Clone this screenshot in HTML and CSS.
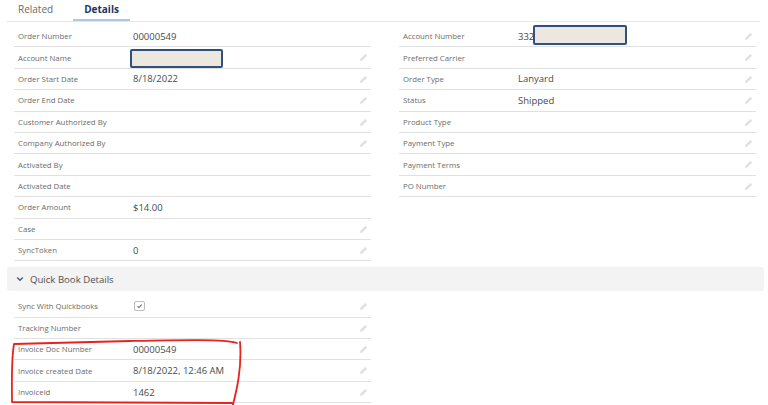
FILE: index.html
```html
<!DOCTYPE html>
<html lang="en">
<head>
    <meta charset="utf-8">
    <title>Order Details</title>
    <link rel="stylesheet" href="styles.css">
</head>
<body>
    <div class="page">
        <div class="tabs">
            <a class="tab">Related</a>
            <a class="tab active">Details</a>
        </div>

        <div class="fields">
            <div class="col">
                <div class="row"><span class="label">Order Number</span><span class="value">00000549</span></div>
                <div class="row"><span class="label">Account Name</span><span class="value"><span class="redact redact-name"></span></span><svg class="pencil" viewBox="0 0 10 10"><path d="M1 9l.6-2.6L7 1l2 2-5.4 5.4z"/></svg></div>
                <div class="row"><span class="label">Order Start Date</span><span class="value">8/18/2022</span><svg class="pencil" viewBox="0 0 10 10"><path d="M1 9l.6-2.6L7 1l2 2-5.4 5.4z"/></svg></div>
                <div class="row"><span class="label">Order End Date</span><span class="value"></span><svg class="pencil" viewBox="0 0 10 10"><path d="M1 9l.6-2.6L7 1l2 2-5.4 5.4z"/></svg></div>
                <div class="row"><span class="label">Customer Authorized By</span><span class="value"></span><svg class="pencil" viewBox="0 0 10 10"><path d="M1 9l.6-2.6L7 1l2 2-5.4 5.4z"/></svg></div>
                <div class="row"><span class="label">Company Authorized By</span><span class="value"></span><svg class="pencil" viewBox="0 0 10 10"><path d="M1 9l.6-2.6L7 1l2 2-5.4 5.4z"/></svg></div>
                <div class="row"><span class="label">Activated By</span><span class="value"></span></div>
                <div class="row"><span class="label">Activated Date</span><span class="value"></span></div>
                <div class="row"><span class="label">Order Amount</span><span class="value">$14.00</span></div>
                <div class="row"><span class="label">Case</span><span class="value"></span><svg class="pencil" viewBox="0 0 10 10"><path d="M1 9l.6-2.6L7 1l2 2-5.4 5.4z"/></svg></div>
                <div class="row"><span class="label">SyncToken</span><span class="value">0</span><svg class="pencil" viewBox="0 0 10 10"><path d="M1 9l.6-2.6L7 1l2 2-5.4 5.4z"/></svg></div>
            </div>
            <div class="col">
                <div class="row"><span class="label">Account Number</span><span class="value">332<span class="redact redact-number"></span></span><svg class="pencil" viewBox="0 0 10 10"><path d="M1 9l.6-2.6L7 1l2 2-5.4 5.4z"/></svg></div>
                <div class="row"><span class="label">Preferred Carrier</span><span class="value"></span><svg class="pencil" viewBox="0 0 10 10"><path d="M1 9l.6-2.6L7 1l2 2-5.4 5.4z"/></svg></div>
                <div class="row"><span class="label">Order Type</span><span class="value">Lanyard</span><svg class="pencil" viewBox="0 0 10 10"><path d="M1 9l.6-2.6L7 1l2 2-5.4 5.4z"/></svg></div>
                <div class="row"><span class="label">Status</span><span class="value">Shipped</span><svg class="pencil" viewBox="0 0 10 10"><path d="M1 9l.6-2.6L7 1l2 2-5.4 5.4z"/></svg></div>
                <div class="row"><span class="label">Product Type</span><span class="value"></span><svg class="pencil" viewBox="0 0 10 10"><path d="M1 9l.6-2.6L7 1l2 2-5.4 5.4z"/></svg></div>
                <div class="row"><span class="label">Payment Type</span><span class="value"></span><svg class="pencil" viewBox="0 0 10 10"><path d="M1 9l.6-2.6L7 1l2 2-5.4 5.4z"/></svg></div>
                <div class="row"><span class="label">Payment Terms</span><span class="value"></span><svg class="pencil" viewBox="0 0 10 10"><path d="M1 9l.6-2.6L7 1l2 2-5.4 5.4z"/></svg></div>
                <div class="row"><span class="label">PO Number</span><span class="value"></span><svg class="pencil" viewBox="0 0 10 10"><path d="M1 9l.6-2.6L7 1l2 2-5.4 5.4z"/></svg></div>
            </div>
        </div>

        <div class="section-head">
            <svg class="chevron" viewBox="0 0 10 10"><path d="M1.5 3l3.5 3.5L8.5 3"/></svg>
            <span>Quick Book Details</span>
        </div>

        <div class="fields">
            <div class="col">
                <div class="row"><span class="label">Sync With Quickbooks</span><span class="value"><span class="checkbox"><svg viewBox="0 0 10 10"><path d="M2.5 5.2l1.8 1.8 3.4-3.8"/></svg></span></span><svg class="pencil" viewBox="0 0 10 10"><path d="M1 9l.6-2.6L7 1l2 2-5.4 5.4z"/></svg></div>
                <div class="row"><span class="label">Tracking Number</span><span class="value"></span><svg class="pencil" viewBox="0 0 10 10"><path d="M1 9l.6-2.6L7 1l2 2-5.4 5.4z"/></svg></div>
                <div class="row"><span class="label">Invoice Doc Number</span><span class="value">00000549</span><svg class="pencil" viewBox="0 0 10 10"><path d="M1 9l.6-2.6L7 1l2 2-5.4 5.4z"/></svg></div>
                <div class="row"><span class="label">Invoice created Date</span><span class="value">8/18/2022, 12:46 AM</span><svg class="pencil" viewBox="0 0 10 10"><path d="M1 9l.6-2.6L7 1l2 2-5.4 5.4z"/></svg></div>
                <div class="row"><span class="label">Invoiceid</span><span class="value">1462</span><svg class="pencil" viewBox="0 0 10 10"><path d="M1 9l.6-2.6L7 1l2 2-5.4 5.4z"/></svg></div>
            </div>
            <div class="col"></div>
        </div>
    </div>

    <!-- hand-drawn highlight over the invoice fields -->
    <svg class="annotation" viewBox="0 0 768 405" width="768" height="405">
        <path d="M237 343C225 339 180 340 130 341S40 343 14 344C11 362 12 388 12 402L232 403M240 342C242 368 237 390 231 412"/>
    </svg>
</body>
</html>
```

FILE: styles.css
```css
* {
    margin: 0;
    padding: 0;
    box-sizing: border-box;
}

html, body {
    background: #fff;
    overflow: hidden;
}

body {
    font-family: "Open Sans", "Noto Sans", sans-serif;
    color: #4a4a4a;
    position: relative;
    height: 405px;
}

.page {
    padding: 0 12px 0 14px;
}

/* tabs */
.tabs {
    display: flex;
    gap: 9px;
    height: 22px;
    margin: 0 -4px 0 -7px;
    border-bottom: 1px solid #e4e4e4;
}

.tab {
    padding: 0 11px;
    height: 21px;
    line-height: 19px;
    font-size: 10px;
    color: #6a6a6a;
}

.tab.active {
    color: #1b365f;
    font-weight: 700;
    border-bottom: 2px solid #a8c8ec;
}

/* field grid */
.fields {
    display: grid;
    grid-template-columns: 357px 357px;
    column-gap: 28px;
    margin-top: 4px;
}

.row {
    position: relative;
    display: flex;
    align-items: center;
    height: 21.4px;
    border-bottom: 1px solid #e1e1e1;
    padding-left: 4px;
}

.label {
    width: 115px;
    font-size: 7.8px;
    color: #6b6b6b;
    white-space: nowrap;
}

.value {
    position: relative;
    font-size: 9.5px;
    color: #4a4a4a;
    white-space: nowrap;
}

.pencil {
    position: absolute;
    right: 3px;
    top: 6px;
    width: 9px;
    height: 9px;
    fill: #e0e0e0;
}

/* redaction boxes */
.redact {
    position: absolute;
    background: #ece8df;
    border: 2px solid #30507d;
    border-radius: 2px;
}

.redact-name {
    left: -3px;
    top: -9px;
    width: 93px;
    height: 19px;
}

.redact-number {
    left: 15px;
    top: -5px;
    width: 94px;
    height: 20px;
}

/* section header */
.section-head {
    display: flex;
    align-items: center;
    gap: 6px;
    height: 24px;
    margin: 6px -8px 0 -7px;
    padding-left: 9px;
    background: #f3f3f3;
    border-radius: 3px;
    font-size: 9.6px;
    color: #505050;
}

.chevron {
    width: 8px;
    height: 8px;
    fill: none;
    stroke: #3f5f86;
    stroke-width: 1.8;
}

.section-head + .fields {
    margin-top: 5px;
}

/* checkbox */
.checkbox {
    display: inline-flex;
    width: 11px;
    height: 10px;
    margin-left: 1px;
    border: 1px solid #bdbdbd;
    border-radius: 2px;
    background: #fff;
}

.checkbox svg {
    width: 9px;
    height: 8px;
    fill: none;
    stroke: #6a6a6a;
    stroke-width: 1.3;
}

/* red marker */
.annotation {
    position: absolute;
    left: 0;
    top: 0;
    pointer-events: none;
    fill: none;
    stroke: #e8231f;
    stroke-width: 1.8;
    stroke-linecap: round;
    stroke-linejoin: round;
}
```
